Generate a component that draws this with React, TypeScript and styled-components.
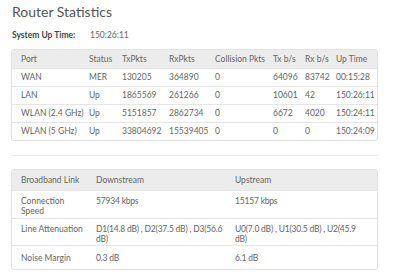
import styled, { createGlobalStyle } from "styled-components"

const GlobalStyle = createGlobalStyle`
  body {
    margin: 0;
    background: #ffffff;
    font-family: "Lato", "Open Sans", sans-serif;
    color: #555555;
  }
`

// Page wrapper with the left gutter
const Page = styled.div`
  width: 400px;
  padding: 3px 22px 0 11px;
  box-sizing: border-box;
`

const Title = styled.h1`
  margin: 0 0 0 1px;
  font-size: 14px;
  line-height: 18px;
  font-weight: 400;
  color: #555555;
`

const UpTimeRow = styled.div`
  display: flex;
  align-items: center;
  height: 20px;
  margin: 4px 0 4px 1px;
  font-size: 8.5px;
`

const UpTimeLabel = styled.span`
  width: 78px;
  font-weight: 700;
  color: #444444;
`

const UpTimeValue = styled.span`
  color: #666666;
`

const TableBox = styled.div`
  border: 1px solid #e2e2e2;
  border-radius: 3px;
  overflow: hidden;
`

const Table = styled.table<{ $nowrap?: boolean }>`
  width: 100%;
  border-collapse: collapse;
  table-layout: fixed;
  font-size: 8.5px;
  line-height: 10px;
  white-space: ${(p) => (p.$nowrap ? "nowrap" : "normal")};
`

const Col = styled.col<{ $w: number }>`
  width: ${(p) => p.$w}px;
`

const HeadRow = styled.tr<{ $h: number }>`
  height: ${(p) => p.$h}px;
  background: #ececec;
`

const Row = styled.tr<{ $h: number }>`
  height: ${(p) => p.$h}px;
  border-top: 1px solid #e6e6e6;
`

const Th = styled.th`
  padding: 0 0 0 9px;
  text-align: left;
  font-weight: 400;
  color: #666666;
  white-space: nowrap;
`

const Td = styled.td`
  padding: 0 0 0 9px;
  color: #666666;
  vertical-align: middle;
`

// broadband cells sit at the top of their row, values set a little tighter
const LinkCell = styled(Td)<{ $top: number; $padRight?: number; $tight?: boolean }>`
  vertical-align: top;
  padding-top: ${(p) => p.$top}px;
  padding-right: ${(p) => p.$padRight ?? 0}px;
  letter-spacing: ${(p) => (p.$tight ? "-0.2px" : "normal")};
`

const Divider = styled.hr`
  margin: 14px 0 13px;
  border: none;
  border-top: 1px solid #eeeeee;
`

const ports = [
  ["WAN", "MER", "130205", "364890", "0", "64096", "83742", "00:15:28"],
  ["LAN", "Up", "1865569", "261266", "0", "10601", "42", "150:26:11"],
  ["WLAN (2.4 GHz)", "Up", "5151857", "2862734", "0", "6672", "4020", "150:24:11"],
  ["WLAN (5 GHz)", "Up", "33804692", "15539405", "0", "0", "0", "150:24:09"],
]

const link = [
  { name: "Connection Speed", down: "57934 kbps", up: "15157 kbps", h: 28, top: 5 },
  {
    name: "Line Attenuation",
    down: "D1(14.8 dB) , D2(37.5 dB) , D3(56.6 dB)",
    up: "U0(7.0 dB) , U1(30.5 dB) , U2(45.9 dB)",
    h: 27,
    top: 5,
  },
  { name: "Noise Margin", down: "0.3 dB", up: "6.1 dB", h: 24, top: 7 },
]

export default function App() {
  return (
    <>
      <GlobalStyle />
      <Page>
        <Title>Router Statistics</Title>
        <UpTimeRow>
          <UpTimeLabel>System Up Time:</UpTimeLabel>
          <UpTimeValue>150:26:11</UpTimeValue>
        </UpTimeRow>

        <TableBox>
          <Table $nowrap>
            <colgroup>
              {[68, 33, 47, 46, 58, 32, 31, 52].map((w, i) => (
                <Col key={i} $w={w} />
              ))}
            </colgroup>
            <thead>
              <HeadRow $h={18}>
                <Th>Port</Th>
                <Th>Status</Th>
                <Th>TxPkts</Th>
                <Th>RxPkts</Th>
                <Th>Collision Pkts</Th>
                <Th>Tx b/s</Th>
                <Th>Rx b/s</Th>
                <Th>Up Time</Th>
              </HeadRow>
            </thead>
            <tbody>
              {ports.map((r) => (
                <Row key={r[0]} $h={18}>
                  {r.map((c, i) => (
                    <Td key={i}>{c}</Td>
                  ))}
                </Row>
              ))}
            </tbody>
          </Table>
        </TableBox>

        <Divider />

        <TableBox>
          <Table>
            <colgroup>
              <Col $w={75} />
              <Col $w={139} />
              <Col $w={153} />
            </colgroup>
            <thead>
              <HeadRow $h={20}>
                <Th>Broadband Link</Th>
                <Th>Downstream</Th>
                <Th>Upstream</Th>
              </HeadRow>
            </thead>
            <tbody>
              {link.map((r) => (
                <Row key={r.name} $h={r.h}>
                  <LinkCell $top={r.top} $padRight={4}>{r.name}</LinkCell>
                  <LinkCell $top={r.top} $padRight={2} $tight>{r.down}</LinkCell>
                  <LinkCell $top={r.top} $padRight={10} $tight>{r.up}</LinkCell>
                </Row>
              ))}
            </tbody>
          </Table>
        </TableBox>
      </Page>
    </>
  )
}
